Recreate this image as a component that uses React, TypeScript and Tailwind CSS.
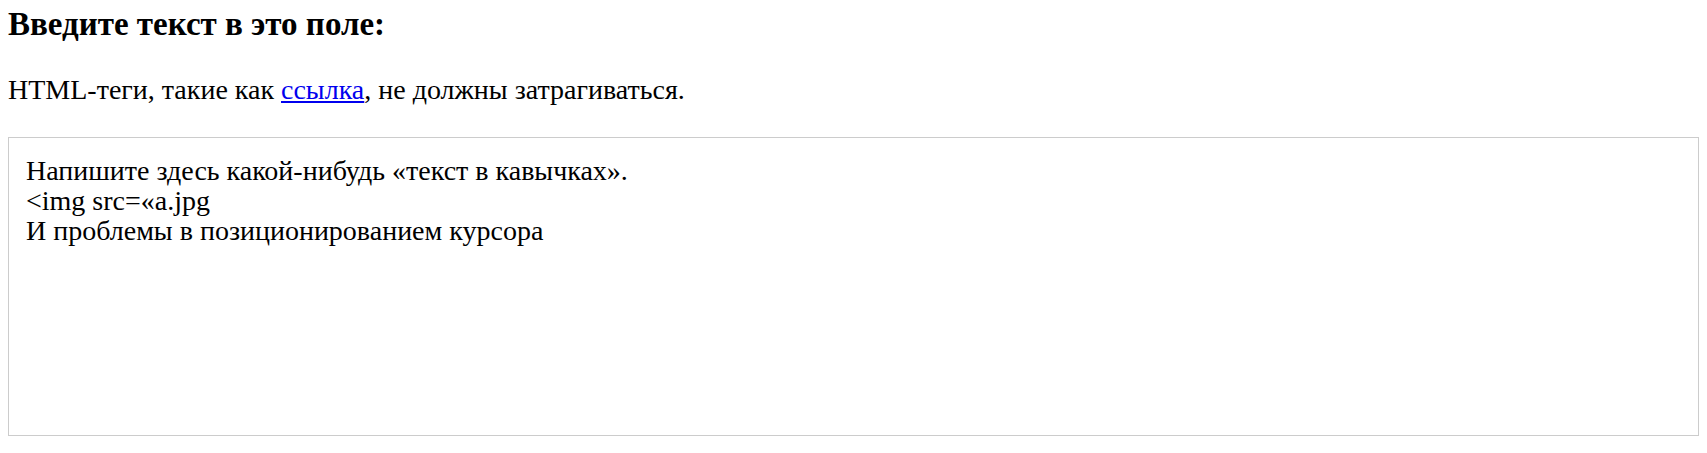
export default function App() {
  return (
    <div className="min-h-[453px] bg-white px-[8px] pt-[6px] text-black font-['Liberation_Serif','Times_New_Roman',serif]">
      {/* Heading */}
      <h3 className="text-[33px] leading-[37px] font-bold">Введите текст в это поле:</h3>

      <p className="mt-[32px] text-[28px] leading-[30px]">
        HTML-теги, такие как{' '}
        <a href="#" className="text-[#0000ee] underline">ссылка</a>
        , не должны затрагиваться.
      </p>

      {/* Editable area */}
      <div className="mt-[32px] h-[299px] border border-[#cccccc] px-[17px] pt-[18px] text-[28px] leading-[30px]">
        <div>Напишите здесь какой-нибудь «текст в кавычках».</div>
        <div>&lt;img src=«a.jpg</div>
        <div>И проблемы в позиционированием курсора</div>
      </div>
    </div>
  )
}
